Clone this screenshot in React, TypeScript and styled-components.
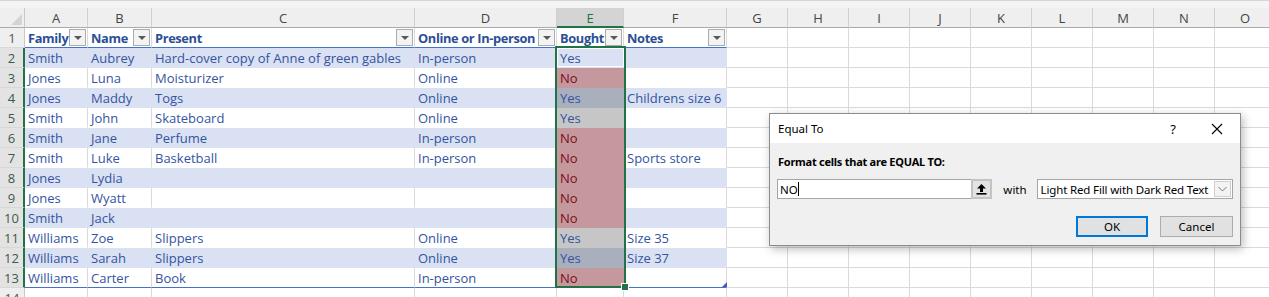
import styled, { createGlobalStyle } from "styled-components";

const GlobalStyle = createGlobalStyle`
  html, body {
    margin: 0;
    padding: 0;
    background: #ffffff;
    overflow: hidden;
  }
`

const GRID = "#dadada";
const BAND = "#d9e1f2";
const TABLE_LINE = "#4472c4";
const SEL = "#217346";

const columns = [
  { key: "A", w: 63 },
  { key: "B", w: 64 },
  { key: "C", w: 263 },
  { key: "D", w: 142 },
  { key: "E", w: 67 },
  { key: "F", w: 103 },
  { key: "G", w: 61 },
  { key: "H", w: 61 },
  { key: "I", w: 61 },
  { key: "J", w: 61 },
  { key: "K", w: 61 },
  { key: "L", w: 61 },
  { key: "M", w: 61 },
  { key: "N", w: 61 },
  { key: "O", w: 61 },
];

const headers = ["Family", "Name", "Present", "Online or In-person", "Bought", "Notes"];

const rows: string[][] = [
  ["Smith", "Aubrey", "Hard-cover copy of Anne of green gables", "In-person", "Yes", ""],
  ["Jones", "Luna", "Moisturizer", "Online", "No", ""],
  ["Jones", "Maddy", "Togs", "Online", "Yes", "Childrens size 6"],
  ["Smith", "John", "Skateboard", "Online", "Yes", ""],
  ["Smith", "Jane", "Perfume", "In-person", "No", ""],
  ["Smith", "Luke", "Basketball", "In-person", "No", "Sports store"],
  ["Jones", "Lydia", "", "", "No", ""],
  ["Jones", "Wyatt", "", "", "No", ""],
  ["Smith", "Jack", "", "", "No", ""],
  ["Williams", "Zoe", "Slippers", "Online", "Yes", "Size 35"],
  ["Williams", "Sarah", "Slippers", "Online", "Yes", "Size 37"],
  ["Williams", "Carter", "Book", "In-person", "No", ""],
];

const Screen = styled.div`
  position: relative;
  width: 1269px;
  height: 297px;
  overflow: hidden;
  font-family: "Open Sans", "Noto Sans", sans-serif;
`

const TopStrip = styled.div`
  height: 8px;
  box-sizing: border-box;
  background: #f4f4f4;
  border-top: 1px solid #d6d6d6;
`

const Sheet = styled.div`
  display: grid;
  grid-template-columns: 25px ${columns.map((c) => `${c.w}px`).join(" ")};
  grid-auto-rows: 20px;
`

const Corner = styled.div`
  position: relative;
  background: #efefef;
  box-sizing: border-box;
  border-right: 1px solid #c8c8c8;
  border-bottom: 1px solid #ababab;

  &::after {
    content: "";
    position: absolute;
    right: 2px;
    bottom: 2px;
    border-style: solid;
    border-width: 0 0 11px 11px;
    border-color: transparent transparent #d3d3d3 transparent;
  }
`

const ColHead = styled.div<{ $selected?: boolean }>`
  box-sizing: border-box;
  display: flex;
  align-items: center;
  justify-content: center;
  padding-top: 1px;
  font-size: 13px;
  color: ${(p) => (p.$selected ? SEL : "#444444")};
  background: ${(p) => (p.$selected ? "#d4d4d4" : "#efefef")};
  border-right: 1px solid #d0d0d0;
  border-bottom: ${(p) => (p.$selected ? `2px solid ${SEL}` : "1px solid #ababab")};
`

const RowHead = styled.div<{ $selected?: boolean }>`
  box-sizing: border-box;
  display: flex;
  align-items: center;
  justify-content: center;
  padding-top: 1px;
  font-size: 13px;
  color: ${(p) => (p.$selected ? "#3f5a48" : "#555555")};
  background: ${(p) => (p.$selected ? "#e3e3e3" : "#efefef")};
  border-bottom: 1px solid #d8d8d8;
  border-right: ${(p) => (p.$selected ? `2px solid ${SEL}` : "1px solid #c8c8c8")};
`

type Fill = "white" | "band" | "no" | "yes" | "yesBand";

const fills: Record<Fill, string> = {
  white: "#ffffff",
  band: BAND,
  no: "#c4989c",
  yes: "#c6c6c6",
  yesBand: "#a9afbd",
};

const Cell = styled.div<{ $fill: Fill; $table?: boolean; $line?: boolean; $bold?: boolean; $red?: boolean }>`
  box-sizing: border-box;
  display: flex;
  align-items: center;
  justify-content: space-between;
  padding: 1px 1px 0 3px;
  overflow: hidden;
  white-space: nowrap;
  font-size: ${(p) => (p.$bold ? "12.8px" : "13px")};
  letter-spacing: ${(p) => (p.$bold ? "-0.35px" : "0")};
  font-weight: ${(p) => (p.$bold ? 700 : 400)};
  color: ${(p) => (p.$red ? "#7d0b1f" : p.$bold ? "#2b4f95" : "#3554a0")};
  background: ${(p) => fills[p.$fill]};
  border-right: 1px solid ${(p) => (p.$fill === "white" ? GRID : fills[p.$fill])};
  border-bottom: 1px solid
    ${(p) => (p.$line ? TABLE_LINE : p.$table ? fills[p.$fill] : GRID)};
`

const FilterButton = styled.div`
  flex: none;
  width: 17px;
  height: 17px;
  box-sizing: border-box;
  display: flex;
  align-items: center;
  justify-content: center;
  background: #f3f3f3;
  border: 1px solid #acacac;
  margin-bottom: 1px;

  &::after {
    content: "";
    border-style: solid;
    border-width: 4px 4px 0 4px;
    border-color: #5a5a5a transparent transparent transparent;
  }
`

const Selection = styled.div`
  position: absolute;
  left: 555px;
  top: 46px;
  width: 71px;
  height: 242px;
  box-sizing: border-box;
  border: 2px solid ${SEL};
  pointer-events: none;
`

const ActiveCell = styled.div`
  height: 19px;
  box-sizing: border-box;
  border: 1px solid #ffffff;
`

const FillHandle = styled.div`
  position: absolute;
  right: -5px;
  bottom: -5px;
  width: 6px;
  height: 6px;
  background: ${SEL};
  border: 1px solid #ffffff;
`

const TableCornerMark = styled.div`
  position: absolute;
  left: 722px;
  top: 282px;
  border-style: solid;
  border-width: 0 0 5px 5px;
  border-color: transparent transparent #4f55b8 transparent;
`

/* dialog */

const Dialog = styled.div`
  position: absolute;
  left: 769px;
  top: 113px;
  width: 472px;
  height: 133px;
  box-sizing: border-box;
  background: #f0f0f0;
  border: 1px solid #8c8c8c;
  box-shadow: 2px 3px 9px rgba(0, 0, 0, 0.28);
  font-family: "Noto Sans", "Open Sans", sans-serif;
  font-size: 11.5px;
  color: #000000;
  display: flex;
  flex-direction: column;
`

const TitleBar = styled.div`
  height: 29px;
  flex: none;
  background: #ffffff;
  display: flex;
  align-items: center;
  padding-left: 8px;
`

const TitleText = styled.div`
  flex: 1;
`

const HelpMark = styled.div`
  width: 14px;
  text-align: center;
  font-size: 13px;
  margin-right: 31px;
`

const CloseIcon = styled.svg`
  width: 12px;
  height: 12px;
  margin-right: 17px;
`

const Body = styled.div`
  flex: 1;
  display: flex;
  flex-direction: column;
  padding: 11px 7px 0 8px;
`

const Prompt = styled.div`
  font-size: 11px;
  font-weight: 700;
  line-height: 16px;
  letter-spacing: -0.25px;
`

const FieldRow = styled.div`
  display: flex;
  align-items: center;
  margin-top: 9px;
  margin-left: -1px;
`

const ValueBox = styled.div`
  width: 195px;
  height: 20px;
  box-sizing: border-box;
  background: #ffffff;
  border: 1px solid #a5a5a5;
  border-right: none;
  display: flex;
  align-items: center;
  padding-left: 2px;
`

const Caret = styled.span`
  display: inline-block;
  width: 1px;
  height: 14px;
  background: #000000;
`

const RefButton = styled.div`
  width: 21px;
  height: 20px;
  box-sizing: border-box;
  background: #e3e3e3;
  border: 2px solid #c4c4c4;
  display: flex;
  align-items: center;
  justify-content: center;
`

const WithLabel = styled.div`
  margin: 0 10px 0 11px;
`

const SelectBox = styled.div`
  width: 197px;
  height: 20px;
  box-sizing: border-box;
  background: #ffffff;
  border: 1px solid #a5a5a5;
  display: flex;
  align-items: center;
  justify-content: space-between;
  padding-left: 3px;
  white-space: nowrap;
  letter-spacing: -0.15px;
`

const SelectArrow = styled.div`
  width: 17px;
  height: 16px;
  margin-right: 1px;
  box-sizing: border-box;
  background: #f3f3f3;
  border: 1px solid #cfcfcf;
  display: flex;
  align-items: center;
  justify-content: center;
`

const ButtonRow = styled.div`
  display: flex;
  justify-content: flex-end;
  gap: 12px;
  margin-top: 17px;
`

const DialogButton = styled.div<{ $primary?: boolean }>`
  width: ${(p) => (p.$primary ? 72 : 73)}px;
  height: 21px;
  box-sizing: border-box;
  background: #e1e1e1;
  border: ${(p) => (p.$primary ? "2px solid #0078d7" : "1px solid #adadad")};
  display: flex;
  align-items: center;
  justify-content: center;
`

const cellFill = (rowIndex: number, colIndex: number, value: string): Fill => {
  const band = rowIndex % 2 === 0;
  if (colIndex === 4 && rowIndex > 0) {
    if (value === "No") return "no";
    return band ? "yesBand" : "yes";
  }
  return band ? "band" : "white";
};

export default function App() {
  return (
    <>
      <GlobalStyle />
      <Screen>
        <TopStrip />
        <Sheet>
          <Corner />
          {columns.map((c) => (
            <ColHead key={c.key} $selected={c.key === "E"}>
              {c.key}
            </ColHead>
          ))}

          {/* header row of the table */}
          <RowHead>1</RowHead>
          {columns.map((c, i) =>
            i < 6 ? (
              <Cell key={c.key} $fill="white" $line $bold>
                <span>{headers[i]}</span>
                <FilterButton />
              </Cell>
            ) : (
              <Cell key={c.key} $fill="white" />
            )
          )}

          {rows.map((r, ri) => [
            <RowHead key={`h${ri}`} $selected>
              {ri + 2}
            </RowHead>,
            ...columns.map((c, ci) => {
              if (ci >= 6) return <Cell key={`${ri}-${c.key}`} $fill="white" />;
              const value = r[ci];
              return (
                <Cell
                  key={`${ri}-${c.key}`}
                  $fill={cellFill(ri, ci, value)}
                  $table
                  $line={ri === rows.length - 1}
                  $red={ci === 4 && value === "No"}
                >
                  {value}
                </Cell>
              );
            }),
          ])}

          <RowHead>14</RowHead>
          {columns.map((c) => (
            <Cell key={`14-${c.key}`} $fill="white" />
          ))}
        </Sheet>

        <Selection>
          <ActiveCell />
          <FillHandle />
        </Selection>
        <TableCornerMark />

        <Dialog>
          <TitleBar>
            <TitleText>Equal To</TitleText>
            <HelpMark>?</HelpMark>
            <CloseIcon viewBox="0 0 12 12">
              <path d="M1 1 L11 11 M11 1 L1 11" stroke="#000" strokeWidth="1.1" fill="none" />
            </CloseIcon>
          </TitleBar>
          <Body>
            <Prompt>Format cells that are EQUAL TO:</Prompt>
            <FieldRow>
              <ValueBox>
                NO
                <Caret />
              </ValueBox>
              <RefButton>
                <svg width="11" height="12" viewBox="0 0 11 12">
                  <path d="M5.5 1 L10 5.5 H7 V9 H4 V5.5 H1 Z" fill="#000" />
                  <rect x="0.5" y="10" width="10" height="1.6" fill="#000" />
                </svg>
              </RefButton>
              <WithLabel>with</WithLabel>
              <SelectBox>
                Light Red Fill with Dark Red Text
                <SelectArrow>
                  <svg width="9" height="6" viewBox="0 0 9 6">
                    <path d="M0.5 1 L4.5 5 L8.5 1" stroke="#7a7a7a" strokeWidth="1" fill="none" />
                  </svg>
                </SelectArrow>
              </SelectBox>
            </FieldRow>
            <ButtonRow>
              <DialogButton $primary>OK</DialogButton>
              <DialogButton>Cancel</DialogButton>
            </ButtonRow>
          </Body>
        </Dialog>
      </Screen>
    </>
  );
}
